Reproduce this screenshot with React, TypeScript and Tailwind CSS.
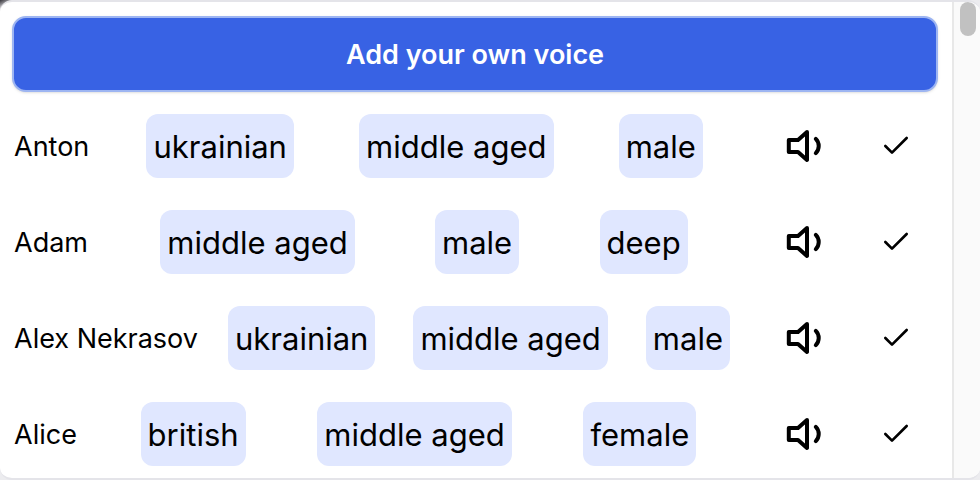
import { Check } from "lucide-react";

type Voice = { name: string; tags: string[] };

const voices: Voice[] = [
  { name: "Anton", tags: ["ukrainian", "middle aged", "male"] },
  { name: "Adam", tags: ["middle aged", "male", "deep"] },
  { name: "Alex Nekrasov", tags: ["ukrainian", "middle aged", "male"] },
  { name: "Alice", tags: ["british", "middle aged", "female"] },
];

function VolumeIcon() {
  return (
    <svg
      className="size-12"
      viewBox="0 0 24 24"
      fill="none"
      stroke="currentColor"
      strokeWidth="2"
      strokeLinecap="round"
      strokeLinejoin="round"
      aria-hidden="true"
    >
      <polygon points="11.5 5 7 9 2.4 9 2.4 15 7 15 11.5 19 11.5 5" />
      <path d="M15.9 8.46a5 5 0 0 1 0 7.07" />
    </svg>
  );
}

function VoiceRow({ voice }: { voice: Voice }) {
  return (
    <li className="flex h-16 items-center pr-6 pl-0.5">
      <span className="pt-0.5 text-[27px] leading-10 whitespace-nowrap">{voice.name}</span>
      <div className="ml-2 flex flex-1 items-center justify-evenly gap-4">
        {voice.tags.map((tag) => (
          <span
            key={tag}
            className="flex h-16 items-center rounded-xl bg-[#e0e7ff] px-[7px] pt-0.5 text-[31px] leading-12 whitespace-nowrap"
          >
            {tag}
          </span>
        ))}
      </div>
      <button type="button" aria-label={`Play ${voice.name}`} className="ml-8">
        <VolumeIcon />
      </button>
      <button type="button" aria-label={`Select ${voice.name}`} className="ml-12">
        <Check className="size-8" strokeWidth={2} />
      </button>
    </li>
  );
}

export default function App() {
  return (
    <div className="h-screen bg-gradient-to-br from-[#38363c] from-0% via-[#ececef] via-1% to-[#ececef] font-['Inter',sans-serif] text-black">
      <div className="flex h-full overflow-hidden rounded-xl border-y-2 border-[#e4e4e9] bg-white">
        <main className="min-w-0 flex-1 pt-3.5 pr-3.5 pl-3">
          <button
            type="button"
            className="flex h-19 w-full items-center justify-center rounded-[14px] border-2 border-[#9db5f2] bg-[#3862e4] pt-0.5 text-[27px] font-semibold text-white shadow-sm"
          >
            Add your own voice
          </button>
          <ul className="mt-[22px] flex flex-col gap-8 pr-0.5">
            {voices.map((voice) => (
              <VoiceRow key={voice.name} voice={voice} />
            ))}
          </ul>
        </main>
        <div className="w-7 shrink-0 border-l-2 border-[#e8e8e8] bg-[#fafafa] px-1.5">
          <div className="h-[34px] w-4 rounded-full bg-[#c1c1c1]" />
        </div>
      </div>
    </div>
  );
}
